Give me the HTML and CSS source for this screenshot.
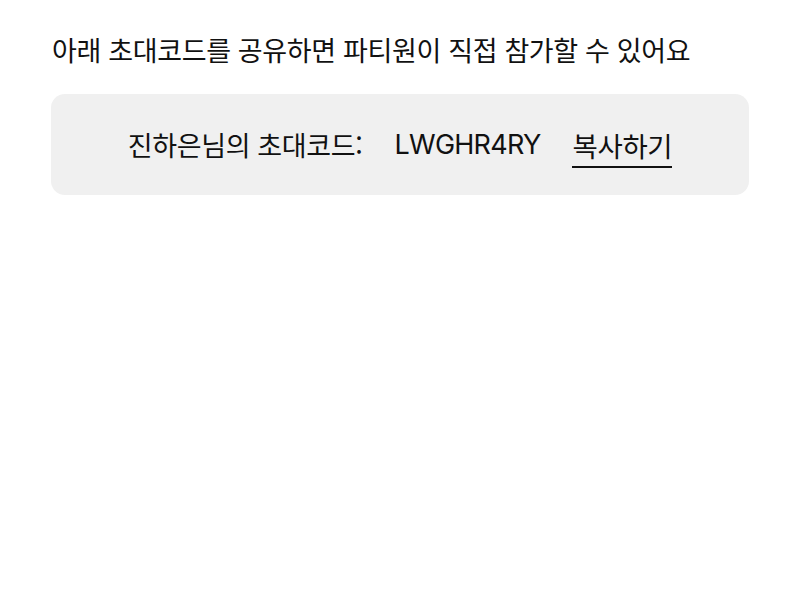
FILE: index.html
```html
<!DOCTYPE html>
<html lang="ko">
<head>
<meta charset="utf-8">
<link rel="stylesheet" href="styles.css">
</head>
<body>
<main class="page">
  <p class="title">아래 초대코드를 공유하면 파티원이 직접 참가할 수 있어요</p>
  <div class="code-box">
    <span class="label">진하은님의 초대코드:</span>
    <span class="code">LWGHR4RY</span>
    <span class="copy">복사하기</span>
  </div>
</main>
</body>
</html>
```
FILE: styles.css
```css
html, body {
  margin: 0;
  padding: 0;
  background: #ffffff;
}
.page {
  padding: 32px 51px 0 51px;
  font-family: "Noto Sans CJK KR", "Noto Sans", sans-serif;
  color: #111111;
}
.title {
  margin: 0 0 0 1px;
  font-size: 27px;
  line-height: 36px;
  letter-spacing: -0.35px;
  font-weight: 400;
}
.code-box {
  margin-top: 26px;
  height: 101px;
  background: #f0f0f0;
  border-radius: 14px;
  display: flex;
  align-items: center;
  justify-content: center;
  gap: 32px;
  font-size: 27px;
  letter-spacing: -0.35px;
}
.label {
  line-height: 36px;
}
.code {
  font-family: "Inter", "Noto Sans", sans-serif;
  font-size: 27px;
  letter-spacing: -0.75px;
  line-height: 36px;
}
.copy {
  font-size: 27.5px;
  padding: 5px 0 3px 0;
  border-bottom: 2px solid #111111;
  line-height: 36px;
}
```
